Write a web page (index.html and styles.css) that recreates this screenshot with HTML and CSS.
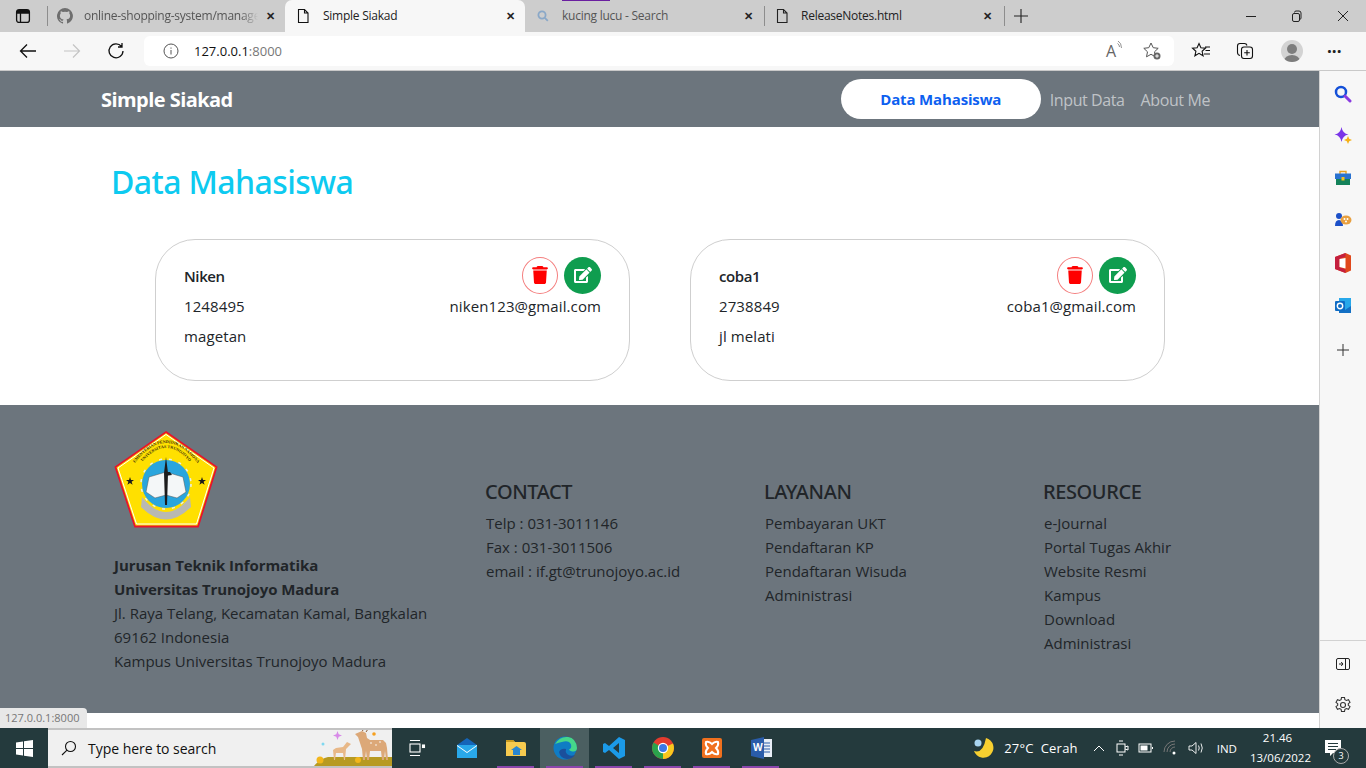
FILE: index.html
```html
<!DOCTYPE html>
<html lang="id">
<head>
<meta charset="utf-8">
<title>Simple Siakad</title>
<link rel="stylesheet" href="styles.css">
</head>
<body>
<div class="screen">
  <div class="tabstrip">
    <div class="tabside">
      <svg width="16" height="16" viewBox="0 0 16 16" fill="none" stroke="#111" stroke-width="1.3"><rect x="1.6" y="1.6" width="12.8" height="12.8" rx="2.5"/><path d="M2 5h12M5.5 5v9" /><path d="M2 2h12v3H2z" fill="#111" stroke="none"/></svg>
    </div>
    <div class="sep"></div>
    <div class="tab tab-gh">
      <svg class="tabicon" width="16" height="16" viewBox="0 0 16 16"><path fill="#6e6e6e" d="M8 0a8 8 0 0 0-2.53 15.59c.4.07.55-.17.55-.38v-1.4c-2.23.48-2.7-1.07-2.7-1.07-.36-.93-.89-1.17-.89-1.17-.73-.5.05-.49.05-.49.8.06 1.23.83 1.23.83.72 1.22 1.87.87 2.33.66.07-.52.28-.87.5-1.07-1.77-.2-3.64-.89-3.64-3.95 0-.87.31-1.59.82-2.15-.08-.2-.36-1.02.08-2.12 0 0 .67-.21 2.2.82a7.6 7.6 0 0 1 4 0c1.53-1.04 2.2-.82 2.2-.82.44 1.1.16 1.92.08 2.12.51.56.82 1.27.82 2.15 0 3.07-1.87 3.75-3.65 3.95.29.25.54.73.54 1.48v2.2c0 .21.15.46.55.38A8 8 0 0 0 8 0z"/></svg>
      <span class="tabtitle muted fade">online-shopping-system/manage</span>
      <span class="tabx">✕</span>
    </div>
    <div class="tab tab-active">
      <svg class="tabicon" width="16" height="16" viewBox="0 0 16 16" fill="none" stroke="#111" stroke-width="1.1"><path d="M3.5 1.5h6l3.5 3.5v9.5h-9.5zM9.5 1.5V5H13"/></svg>
      <span class="tabtitle">Simple Siakad</span>
      <span class="tabx">✕</span>
    </div>
    <div class="tab tab-search">
      <svg class="tabicon" width="16" height="16" viewBox="0 0 16 16" fill="none" stroke="#8aa8c8" stroke-width="1.8"><circle cx="7" cy="7" r="3.6"/><path d="M9.8 9.8l3 3"/></svg>
      <span class="tabtitle muted">kucing lucu - Search</span>
      <span class="tabx">✕</span>
    </div>
    <div class="sep"></div>
    <div class="tab tab-notes">
      <svg class="tabicon" width="16" height="16" viewBox="0 0 16 16" fill="none" stroke="#222" stroke-width="1.1"><path d="M3.5 1.5h6l3.5 3.5v9.5h-9.5zM9.5 1.5V5H13"/></svg>
      <span class="tabtitle">ReleaseNotes.html</span>
      <span class="tabx">✕</span>
    </div>
    <div class="sep"></div>
    <div class="newtab">
      <svg width="16" height="16" viewBox="0 0 16 16" stroke="#222" stroke-width="1.1"><path d="M8 1v14M1 8h14"/></svg>
    </div>
    <div class="winctl">
      <svg width="12" height="12" viewBox="0 0 12 12" stroke="#222"><path d="M1 6.5h10"/></svg>
      <svg width="12" height="12" viewBox="0 0 12 12" fill="none" stroke="#222"><rect x="1.5" y="3.5" width="7" height="8" rx="1.5"/><path d="M3.5 2.5q0-1.500 1.500-1.500h3q2 0 2 2v5q0 1-1 1.500"/></svg>
      <svg width="12" height="12" viewBox="0 0 12 12" stroke="#222"><path d="M1 1l10 10M11 1L1 11"/></svg>
    </div>
  </div>

  <div class="toolbar">
    <svg class="navbtn" width="18" height="18" viewBox="0 0 18 18" fill="none" stroke="#111" stroke-width="1.3"><path d="M17 9H1.500M8 2.500L1.500 9 8 15.500"/></svg>
    <svg class="navbtn" width="18" height="18" viewBox="0 0 18 18" fill="none" stroke="#c4c4c4" stroke-width="1.2"><path d="M1 9h15.500M10 2.500L16.500 9 10 15.500"/></svg>
    <svg class="navbtn" width="18" height="18" viewBox="0 0 18 18" fill="none" stroke="#111" stroke-width="1.3"><path d="M14.500 4.500A7 7 0 1 0 16 9M15 1v4h-4"/></svg>
    <div class="omnibox">
      <svg width="16" height="16" viewBox="0 0 16 16" fill="none" stroke="#555"><circle cx="8" cy="8" r="7"/><path d="M8 7v4.500M8 4.500v1.200"/></svg>
      <span class="url">127.0.0.1<span class="urlport">:8000</span></span>
      <span class="grow"></span>
      <span class="readaloud">A<svg width="6" height="10" viewBox="0 0 6 10" fill="none" stroke="#777" stroke-width=".8"><path d="M1 1q3.500 2 3.500 7M.5 3.500q2 1 2 3.500"/></svg></span>
      <svg width="20" height="20" viewBox="0 0 20 20" fill="none" stroke="#555"><path d="M9 2l2.200 4.700 5 .6-3.700 3.500 1 5L9 13.300 4.500 15.800l1-5L1.800 7.300l5-.6z"/><circle cx="15" cy="15" r="3.500" fill="#666" stroke="none"/><path d="M13.200 15h3.600M15 13.200v3.600" stroke="#fff"/></svg>
    </div>
    <svg class="tool tool-first" width="20" height="20" viewBox="0 0 20 20" fill="none" stroke="#111" stroke-width="1.1"><path d="M8 2.500l1.900 4.200 4.600.5-3.400 3.100 1 4.500L8 12.400 3.900 14.800l1-4.500L1.500 7.200l4.600-.5zM14 6h5M14.500 9.500h4.500M13 13h6"/></svg>
    <svg class="tool" width="20" height="20" viewBox="0 0 20 20" fill="none" stroke="#111" stroke-width="1.1"><path d="M5 14.500q-2.500-.5-2.500-3V5q0-2.500 2.500-2.500h4.500q2 0 2.500 2"/><rect x="6.500" y="6" width="11" height="11.500" rx="2.500"/><path d="M12 9v5.500M9.200 11.800h5.600"/></svg>
    <span class="avatar"><span class="avatar-head"></span><span class="avatar-body"></span></span>
    <span class="dots">···</span>
  </div>

  <div class="middle">
    <div class="page">
      <nav class="navbar">
        <a class="brand">Simple Siakad</a>
        <div class="navlinks">
          <a class="pill">Data Mahasiswa</a>
          <a class="navlink">Input Data</a>
          <a class="navlink">About Me</a>
        </div>
      </nav>
      <main class="content">
        <h1 class="heading">Data Mahasiswa</h1>
        <div class="cards">
          <article class="card">
            <div class="card-row">
              <strong class="card-name">Niken</strong>
              <div class="actions">
                <button class="btn btn-del"><svg width="16" height="18" viewBox="0 0 448 512"><path fill="#f00" d="M135 17.700C140.400 6.800 151.500 0 163.600 0h120.800c12.100 0 23.200 6.800 28.600 17.700L320 32h96c17.700 0 32 14.300 32 32s-14.300 32-32 32H32C14.300 96 0 81.700 0 64s14.300-32 32-32h96zM32 128h384l-21.200 339c-1.600 25.300-22.600 45-47.900 45H101.100c-25.300 0-46.300-19.700-47.900-45z"/></svg></button>
                <button class="btn btn-edit"><svg width="18" height="16" viewBox="0 0 576 512"><path fill="#fff" d="M402.600 83.200l90.200 90.200c3.800 3.800 3.800 10 0 13.800L274.400 405.600l-92.800 10.300c-12.400 1.400-22.900-9.100-21.500-21.500l10.300-92.800L388.800 83.200c3.800-3.800 10-3.800 13.800 0zm162-22.900l-48.800-48.800c-15.200-15.200-39.900-15.200-55.200 0l-35.400 35.400c-3.800 3.800-3.800 10 0 13.800l90.200 90.200c3.800 3.800 10 3.800 13.800 0l35.400-35.400c15.200-15.300 15.200-40 0-55.200zM384 346.200V448H64V128h229.800c3.200 0 6.200-1.300 8.500-3.500l40-40c7.600-7.600 2.200-20.500-8.500-20.500H48C21.500 64 0 85.500 0 112v352c0 26.500 21.500 48 48 48h352c26.500 0 48-21.500 48-48V306.200c0-10.700-12.900-16-20.500-8.500l-40 40c-2.200 2.300-3.500 5.300-3.500 8.500z"/></svg></button>
              </div>
            </div>
            <div class="card-row"><span>1248495</span><span>niken123@gmail.com</span></div>
            <div class="card-row"><span>magetan</span></div>
          </article>
          <article class="card">
            <div class="card-row">
              <strong class="card-name">coba1</strong>
              <div class="actions">
                <button class="btn btn-del"><svg width="16" height="18" viewBox="0 0 448 512"><path fill="#f00" d="M135 17.700C140.400 6.800 151.500 0 163.600 0h120.800c12.100 0 23.200 6.800 28.600 17.700L320 32h96c17.700 0 32 14.300 32 32s-14.300 32-32 32H32C14.300 96 0 81.700 0 64s14.300-32 32-32h96zM32 128h384l-21.200 339c-1.600 25.300-22.600 45-47.900 45H101.100c-25.300 0-46.300-19.700-47.900-45z"/></svg></button>
                <button class="btn btn-edit"><svg width="18" height="16" viewBox="0 0 576 512"><path fill="#fff" d="M402.600 83.200l90.200 90.200c3.800 3.800 3.800 10 0 13.800L274.400 405.600l-92.800 10.300c-12.400 1.400-22.900-9.100-21.500-21.500l10.300-92.800L388.800 83.200c3.800-3.800 10-3.800 13.800 0zm162-22.900l-48.800-48.800c-15.200-15.200-39.900-15.200-55.200 0l-35.400 35.400c-3.800 3.800-3.800 10 0 13.800l90.200 90.200c3.800 3.800 10 3.800 13.800 0l35.400-35.400c15.200-15.300 15.200-40 0-55.200zM384 346.200V448H64V128h229.800c3.200 0 6.200-1.300 8.500-3.500l40-40c7.600-7.600 2.200-20.500-8.500-20.500H48C21.500 64 0 85.500 0 112v352c0 26.500 21.500 48 48 48h352c26.500 0 48-21.500 48-48V306.200c0-10.700-12.900-16-20.500-8.500l-40 40c-2.200 2.300-3.500 5.300-3.500 8.500z"/></svg></button>
              </div>
            </div>
            <div class="card-row"><span>2738849</span><span>coba1@gmail.com</span></div>
            <div class="card-row"><span>jl melati</span></div>
          </article>
        </div>
      </main>
      <footer class="footer">
        <div class="fcol">
          <svg class="logo" width="104" height="98" viewBox="0 0 104 98">
            <path d="M51 1L101.500 36 83 95.500 20 95.500 .5 36z" fill="#ffe000" stroke="#e8132a" stroke-width="1.800"/>
            <path d="M51 3.500L99 37 81.500 93 21.500 93 3 37z" fill="none" stroke="#fff" stroke-width="1"/>
            <path id="arcA" d="M19 33Q51 -9 83 33" fill="none"/>
            <path id="arcB" d="M24 35Q51 -1 78 35" fill="none"/>
            <text class="logotext"><textPath href="#arcA" startOffset="50%">KEMENTERIAN PENDIDIKAN NASIONAL</textPath><textPath href="#arcB" startOffset="50%">UNIVERSITAS TRUNOJOYO</textPath></text>
            <path d="M27 66Q51 96 75 66L76 76Q51 101 26 76z" fill="#b9b9b2"/>
            <circle cx="51" cy="53" r="24" fill="#2aa5dd"/>
            <circle cx="51" cy="53" r="25" fill="none" stroke="#e8eef0" stroke-width="1.500" stroke-dasharray="3 7"/>
            <path d="M51 41L68 46 71 61 62 67 51 64 40 67 31 61 34 46z" fill="#f4f7f8" stroke="#555" stroke-width=".5"/>
            <path d="M51 26L53 42 52 74 50 74 49 42z" fill="#1c1c1c"/>
            <path d="M50 41h5l2 3-7 1z" fill="#1c1c1c"/>
            <path d="M15 46l1 3 3 0-2.400 1.800 1 3L15 52l-2.600 1.800 1-3L11 49l3 0z" fill="#1c1c1c"/>
            <path d="M87 46l1 3 3 0-2.400 1.800 1 3L87 52l-2.600 1.800 1-3L83 49l3 0z" fill="#1c1c1c"/>
          </svg>
          <p class="fline"><b class="fbold">Jurusan Teknik Informatika</b></p>
          <p class="fline"><b class="fbold">Universitas Trunojoyo Madura</b></p>
          <p class="fline">Jl. Raya Telang, Kecamatan Kamal, Bangkalan</p>
          <p class="fline">69162 Indonesia</p>
          <p class="fline">Kampus Universitas Trunojoyo Madura</p>
        </div>
        <div class="fcol fcol-links">
          <h2 class="ftitle">CONTACT</h2>
          <p class="fline">Telp : 031-3011146</p>
          <p class="fline">Fax : 031-3011506</p>
          <p class="fline">email : if.gt@trunojoyo.ac.id</p>
        </div>
        <div class="fcol fcol-links">
          <h2 class="ftitle">LAYANAN</h2>
          <p class="fline">Pembayaran UKT</p>
          <p class="fline">Pendaftaran KP</p>
          <p class="fline">Pendaftaran Wisuda</p>
          <p class="fline">Administrasi</p>
        </div>
        <div class="fcol fcol-links">
          <h2 class="ftitle">RESOURCE</h2>
          <p class="fline">e-Journal</p>
          <p class="fline">Portal Tugas Akhir</p>
          <p class="fline">Website Resmi</p>
          <p class="fline">Kampus</p>
          <p class="fline">Download</p>
          <p class="fline">Administrasi</p>
        </div>
      </footer>
      <div class="status">127.0.0.1:8000</div>
    </div>
    <aside class="sidebar">
      <svg width="18" height="18" viewBox="0 0 18 18" fill="none"><circle cx="7" cy="7" r="5" stroke="#1450d8" stroke-width="2.500"/><path d="M11 11l5 5" stroke="#8a3be0" stroke-width="3" stroke-linecap="round"/></svg>
      <svg width="18" height="18" viewBox="0 0 18 18"><path d="M7.500 0q1 6.500 7 7.500-6 1-7 7.500-1-6.500-7-7.500 6-1 7-7.500z" fill="#7a35e8"/><path d="M14 9l1.200 2.800L18 13l-2.800 1.200L14 17l-1.200-2.800L10 13l2.800-1.200z" fill="#f5b21a"/></svg>
      <svg width="18" height="18" viewBox="0 0 18 18"><path d="M6 5V2.500h6V5" fill="none" stroke="#e8a020" stroke-width="1.400"/><rect x="1" y="4.500" width="16" height="5.500" fill="#2a72d0"/><rect x="2" y="10" width="14" height="6" fill="#14825a"/><rect x="7.500" y="8" width="3" height="3.500" fill="#f5c020"/></svg>
      <svg width="18" height="18" viewBox="0 0 18 18"><circle cx="5" cy="5" r="3" fill="#1c50c8"/><path d="M1 15q0-6 4-6t4 6z" fill="#1c50c8"/><ellipse cx="12" cy="9" rx="5.500" ry="4.500" fill="#e8a040"/><circle cx="10.500" cy="8" r="1" fill="#fff"/><circle cx="13.500" cy="8" r="1" fill="#fff"/><circle cx="12" cy="10.500" r="1" fill="#fff"/></svg>
      <svg width="18" height="20" viewBox="0 0 18 20"><path d="M1 4L11.500 0 17 2.500v15L11.500 20 1 16z" fill="#e0481c"/><path d="M1 4L11.500 0v3.500L5.500 6v8l6 2.500V20L1 16z" fill="#c41f3e"/><path d="M5.500 6l6-1v10.500l-6-1.500z" fill="#fff"/></svg>
      <svg width="18" height="18" viewBox="0 0 18 18"><rect x="5" y="1" width="12" height="15" fill="#28a8ea"/><path d="M5 9l6 4 6-4v7H5z" fill="#1470c4"/><rect x="1" y="4" width="10" height="10" rx="1" fill="#0f6cc4"/><circle cx="6" cy="9" r="2.700" fill="none" stroke="#fff" stroke-width="1.400"/></svg>
      <svg class="side-add" width="14" height="14" viewBox="0 0 14 14" stroke="#333"><path d="M7 1v12M1 7h12"/></svg>
      <span class="grow"></span>
      <div class="sidebar-foot">
        <svg width="16" height="16" viewBox="0 0 16 16" fill="none" stroke="#222"><rect x="1.500" y="2.500" width="13" height="11" rx="1.500"/><path d="M10.500 2.500v11M4 8h4M6.200 6L8 8 6.200 10"/></svg>
        <svg width="18" height="18" viewBox="0 0 18 18" fill="none" stroke="#333" stroke-width="1.100"><circle cx="9" cy="9" r="2.500"/><path d="M7.500 1.500h3l.4 2.200 1.500.8 2.100-.8 1.500 2.600-1.700 1.400v1.600l1.700 1.400-1.500 2.600-2.100-.8-1.500.8-.4 2.200h-3l-.4-2.200-1.500-.8-2.100.8-1.500-2.600 1.700-1.400V7.700L2 6.300l1.500-2.600 2.100.8 1.500-.8z"/></svg>
      </div>
    </aside>
  </div>

  <div class="taskbar">
    <div class="startbtn">
      <svg width="17" height="17" viewBox="0 0 17 17" fill="#fff"><path d="M0 2.400L7 1.400V8H0zM8 1.200L17 0v8H8zM0 9h7v6.600L0 14.600zM8 9h9v8l-9-1.200z"/></svg>
    </div>
    <div class="searchbox">
      <svg width="16" height="16" viewBox="0 0 16 16" fill="none" stroke="#111" stroke-width="1.100"><circle cx="9.500" cy="6.500" r="5"/><path d="M6 10.200L1 15"/></svg>
      <span class="searchtext">Type here to search</span>
      <span class="grow"></span>
      <svg class="deer" width="78" height="38" viewBox="0 0 78 38">
        <path d="M0 38q6-7 14-9h64v9z" fill="#b79a22"/>
        <path d="M41 6l7-3 4 2 1 5 3 2h13l3 3 1 5 1 12h-2l-1-9-1 9h-2l-1-9H56l-1 9h-2l-1-9-1 9h-2l-1-11-2-6-2-6z" fill="#dca878"/>
        <path d="M49 3l-2-3M52 4l2-3M46 1h10" stroke="#8a5a34" fill="none"/>
        <g fill="#fff"><circle cx="57" cy="15" r=".8"/><circle cx="62" cy="17" r=".8"/><circle cx="66" cy="14" r=".8"/></g>
        <path d="M33 14l4 2-2 2-3 3-1 11h-1l-1-7h-7l-1 7h-1l-1-10 3-2 7-1z" fill="#e8b888"/>
        <path d="M23.500 3l1.200 3.300L28 7.500l-3.300 1.200L23.500 12l-1.200-3.300L19 7.500l3.300-1.200z" fill="#d88ae8"/>
        <circle cx="9" cy="16" r="1.500" fill="#80d8f0"/><circle cx="60" cy="6" r="1.800" fill="#f5a020"/>
        <circle cx="6" cy="32" r="3.500" fill="#f2b61c"/><circle cx="44" cy="32" r="3" fill="#f2b61c"/>
      </svg>
    </div>
    <div class="tbicon tb-view"><svg width="20" height="20" viewBox="0 0 20 20" fill="none" stroke="#fff" stroke-width="1.100"><rect x="3" y="6" width="10" height="8"/><path d="M3 2.500h10M3 17.500h10"/><rect x="15.500" y="7" width="2" height="2.500" fill="#fff"/></svg></div>
    <div class="tbicon"><svg width="24" height="24" viewBox="0 0 24 24"><path d="M12 2l10 7v13H2V9z" fill="#1565b8"/><rect x="2" y="9" width="20" height="13" fill="#29a8ea"/><path d="M2 9l10 7 10-7v1l-10 7-10-7z" fill="#fff"/></svg></div>
    <div class="tbicon tb-on"><svg width="24" height="24" viewBox="0 0 24 24"><path d="M2 5q0-1 1-1h6l2 2h9q2 0 2 2v12H2z" fill="#f7ca4f"/><path d="M2 4h7l2 2H2z" fill="#c89a20"/><rect x="9" y="13" width="7" height="6" fill="#2a86d0"/><path d="M7 14l5.500-4 5.500 4z" fill="#2a86d0"/></svg></div>
    <div class="tbicon tb-on tb-active"><svg width="26" height="26" viewBox="0 0 26 26"><circle cx="13" cy="13" r="11.500" fill="#0f7cc4"/><path d="M3 9Q8 1 16 2q8 1 9 11 0 3-3 3.500-4 0-5-2 3-1 2-5-2-4-7-3-6 1-9 2.500z" fill="#45d68a"/><path d="M14 14q-5-1-7 3 1 6 8 7 5 0 8-4-5 2-8-1-2-2-1-5z" fill="#1b4f9c"/></svg></div>
    <div class="tbicon tb-on"><svg width="24" height="24" viewBox="0 0 24 24"><path d="M17 1l6 3v16l-6 3L7 14l-4 3-2-1V8l2-1 4 3zM17 7l-6 5 6 5z" fill="#1b9ae8"/></svg></div>
    <div class="tbicon tb-on"><svg width="24" height="24" viewBox="0 0 24 24"><circle cx="12" cy="12" r="11" fill="#e33b2e"/><path d="M12 12L22 7.500A11 11 0 0 1 12 23z" fill="#f8c81e"/><path d="M12 12L12 23A11 11 0 0 1 2.500 6.500z" fill="#2ba24c"/><circle cx="12" cy="12" r="5.200" fill="#fff"/><circle cx="12" cy="12" r="4" fill="#3b78e7"/></svg></div>
    <div class="tbicon tb-on"><svg width="24" height="24" viewBox="0 0 24 24"><rect x="2" y="2" width="20" height="20" rx="2" fill="#f0701e"/><path d="M6 6q3-1 6 2 3-3 6-2 1 3-2 6 3 3 2 6-3 1-6-2-3 3-6 2-1-3 2-6-3-3-2-6z" fill="none" stroke="#fff" stroke-width="2"/></svg></div>
    <div class="tbicon tb-on"><svg width="24" height="24" viewBox="0 0 24 24"><rect x="8" y="3" width="15" height="18" fill="#e8eef7"/><path d="M14 7h7M14 10h7M14 13h7M14 16h7" stroke="#2a5caa"/><path d="M2 4l13-3v22L2 20z" fill="#2a5caa"/></svg><span class="word-w">W</span></div>
    <span class="grow"></span>
    <svg class="moon" width="22" height="22" viewBox="0 0 22 22"><path d="M13 1a10 10 0 1 1-12 13q9 3 12-13z" fill="#f8d030"/><circle cx="5" cy="6" r="3.500" fill="#a8d4f0"/></svg>
    <span class="weather">27°C&nbsp; Cerah</span>
    <svg class="tray" width="14" height="14" viewBox="0 0 14 14" fill="none" stroke="#fff"><path d="M2 10l5-5 5 5"/></svg>
    <svg class="tray" width="14" height="18" viewBox="0 0 14 18" fill="none" stroke="#fff"><rect x="2" y="5" width="8" height="8"/><path d="M10 8l3-1v4l-3-1M4 2h4M4 16h4"/></svg>
    <svg class="tray" width="16" height="14" viewBox="0 0 16 14" fill="none" stroke="#fff"><rect x="1" y="3" width="12" height="8"/><rect x="3" y="5" width="6" height="4" fill="#fff"/><path d="M14.500 6v2"/></svg>
    <svg class="tray" width="16" height="16" viewBox="0 0 16 16" fill="none" stroke="#777"><path d="M1 12a11 11 0 0 1 11-11M4 12a8 8 0 0 1 8-8M7 12a5 5 0 0 1 5-5"/><circle cx="11" cy="13" r="1.500" fill="#fff" stroke="none"/></svg>
    <svg class="tray tray-vol" width="16" height="16" viewBox="0 0 16 16" fill="none" stroke="#fff" stroke-width=".9"><path d="M1 6h3l4-3.500v11L4 10H1zM10.500 5.500q1.500 2.500 0 5M13 3.500q2.500 4.500 0 9" /></svg>
    <span class="lang">IND</span>
    <div class="clock"><span class="clock-time">21.46</span><span>13/06/2022</span></div>
    <div class="notif">
      <svg width="16" height="17" viewBox="0 0 16 17"><path d="M0 0h16v13H8l-3 3v-3H0z" fill="#fff"/><path d="M3 3.500h10M3 6.500h10M3 9.500h8" stroke="#243a3d"/></svg>
      <span class="badge">3</span>
    </div>
  </div>
</div>
</body>
</html>
```
FILE: styles.css
```css
* { box-sizing: border-box; }
html, body { margin: 0; padding: 0; overflow: hidden; }
body { width: 1366px; height: 768px; font-family: "Open Sans", "Noto Sans", sans-serif; }
p, h1, h2 { margin: 0; }
.grow { flex: 1; }
.screen { width: 1366px; height: 768px; display: flex; flex-direction: column; background: #fff; }

/* Tab strip */
.tabstrip { height: 32px; flex: none; display: flex; align-items: center; background: #cdcdcd; font: 12px/16px "Open Sans", sans-serif; color: #222; }
.tabside { width: 47px; display: flex; justify-content: center; padding-right: 1px; }
.sep { width: 1px; height: 20px; background: #8d8d8d; flex: none; }
.tab { height: 32px; display: flex; align-items: center; padding: 0 8px 0 10px; flex: none; }
.tab-gh { width: 237px; padding: 0 7px 0 9px; }
.tab-active { width: 240px; background: #f7f7f7; border-radius: 7px 7px 0 0; padding-right: 7px; }
.tab-search { width: 239px; position: relative; }
.tab-search::before { content: ""; position: absolute; left: 37px; top: 0; width: 48px; height: 1px; background: #6a1fa0; }
.tab-notes { width: 239px; padding: 0 9px 0 9px; }
.tabicon { flex: none; margin-right: 12px; }
.tab-gh .tabicon { margin-right: 11px; }
.tab-search .tabicon { margin-right: 11px; }
.tab-notes .tabicon { margin-right: 11px; }
.tabtitle { flex: 1; min-width: 0; white-space: nowrap; letter-spacing: -.25px; }
.muted { color: #555; }
.fade { -webkit-mask-image: linear-gradient(90deg, #000 90%, transparent); mask-image: linear-gradient(90deg, #000 90%, transparent); }
.tabx { width: 16px; text-align: center; font-size: 11px; font-weight: 600; color: #222; margin-left: 4px; flex: none; }
.newtab { width: 32px; display: flex; justify-content: center; }
.winctl { flex: 1; display: flex; justify-content: flex-end; gap: 34px; padding-right: 17px; }

/* Toolbar */
.toolbar { height: 39px; flex: none; display: flex; align-items: center; padding: 0 16px 0 19px; background: #f7f7f7; border-bottom: 1px solid #c9c9c9; }
.navbtn { flex: none; margin-right: 26px; }
.navbtn:nth-child(3) { margin-right: 19px; }
.omnibox { width: 1030px; height: 30px; background: #fff; border-radius: 6px; display: flex; align-items: center; padding: 0 12px 0 19px; gap: 15px; font-size: 13px; }
.url { color: #111; font: 13px "Open Sans", sans-serif; }
.urlport { color: #777; }
.readaloud { color: #666; font-size: 16px; display: flex; align-items: flex-start; margin-right: 4px; gap: 1px; }
.tool { flex: none; margin-left: 24px; }
.tool-first { margin-left: 17px; }
.avatar { width: 22px; height: 22px; margin-left: 26px; border-radius: 50%; background: #d3d3d3; position: relative; overflow: hidden; flex: none; }
.avatar-head { position: absolute; left: 6px; top: 4px; width: 10px; height: 10px; border-radius: 50%; background: #7d7d7d; }
.avatar-body { position: absolute; left: 3px; top: 15px; width: 16px; height: 12px; border-radius: 50%; background: #7d7d7d; }
.dots { margin-left: 24px; font-size: 17px; font-weight: 700; color: #222; line-height: 1; }

/* Middle */
.middle { height: 657px; flex: none; display: flex; }
.page { width: 1319px; flex: none; position: relative; display: flex; flex-direction: column; background: #fff; }
.navbar { height: 56px; flex: none; background: #6c757d; display: flex; align-items: center; justify-content: space-between; padding: 0 109px 0 101px; }
.brand { color: #fff; font-size: 20px; font-weight: 700; letter-spacing: -.55px; }
.navlinks { display: flex; align-items: center; }
.pill { width: 200px; height: 40px; border-radius: 20px; background: #fff; color: #0d5ff0; font-weight: 700; font-size: 15px; letter-spacing: -.15px; display: flex; align-items: center; justify-content: center; margin-right: 9px; }
.navlink { color: rgba(255,255,255,.58); font-size: 16px; line-height: 24px; padding-top: 1px; margin-right: 16px; letter-spacing: -.4px; }
.navlink:last-child { margin-right: 0; }

.content { height: 278px; flex: none; padding: 33px 154px 0 112px; }
.heading { font-family: "Noto Sans", sans-serif; font-size: 32px; line-height: 44px; font-weight: 500; color: #0dcaf0; letter-spacing: -.6px; margin-left: -1px; }
.cards { display: flex; gap: 60px; margin: 35px 0 0 43px; }
.card { width: 475px; height: 142px; border: 1px solid #cfcfcf; border-radius: 40px; padding: 21px 28px 0; font-size: 15px; letter-spacing: .1px; color: #212529; }
.card-row { height: 30px; display: flex; align-items: center; justify-content: space-between; }
.card-name { letter-spacing: -.4px; font-weight: 600; }
.actions { display: flex; gap: 6px; margin-top: -2px; }
.btn { width: 37px; height: 37px; border-radius: 50%; padding: 0; display: flex; align-items: center; justify-content: center; background: #fff; }
.btn-del { border: 1px solid #f47f7f; width: 36px; height: 37px; }
.btn-edit { border: 0; background: #0f9d4f; }

.footer { height: 308px; flex: none; background: #6c757d; padding: 24px 89px 0 114px; display: grid; grid-template-columns: 372px 279px 279px 279px; color: #212529; font-size: 15px; }
.logo { display: block; margin: 2px 0 24px 1px; overflow: visible; }
.logotext { font: 700 4.200px "Liberation Serif", serif; fill: #3a2f10; text-anchor: middle; }
.fline { line-height: 24px; white-space: nowrap; }
.fbold { letter-spacing: -.08px; }
.fcol-links { padding-top: 48px; }
.ftitle { font-family: "Noto Sans", sans-serif; font-size: 20px; line-height: 30px; font-weight: 500; letter-spacing: -.4px; margin: 0 0 4px -1px; }
.status { position: absolute; left: 0; top: 637px; width: 87px; height: 20px; background: #e8e8e8; border-radius: 0 4px 0 0; font: 11px/20px "Open Sans", sans-serif; color: #777; padding-left: 5px; }

/* Sidebar */
.sidebar { flex: 1; display: flex; flex-direction: column; align-items: center; gap: 24px; padding: 14px 0 0; background: #f7f7f7; border-left: 1px solid #d2d2d2; }
.side-add { margin-top: 4px; }
.sidebar-foot { align-self: stretch; height: 88px; border-top: 1px solid #d2d2d2; display: flex; flex-direction: column; align-items: center; gap: 24px; padding-top: 15px; margin-top: -24px; }

/* Taskbar */
.taskbar { height: 40px; flex: none; display: flex; align-items: center; background: #243a3d; color: #fff; font-size: 12px; }
.startbtn { width: 48px; display: flex; justify-content: center; }
.searchbox { width: 344px; height: 40px; flex: none; background: #f0f0f0; border: 1px solid #c2c2c2; border-width: 2px 0; display: flex; align-items: center; padding-left: 13px; overflow: hidden; color: #111; }
.searchtext { margin-left: 11px; font-size: 14px; letter-spacing: -.03px; }
.deer { flex: none; align-self: flex-end; }
.tbicon { width: 49px; height: 40px; display: flex; align-items: center; justify-content: center; position: relative; flex: none; }
.tb-view { width: 50px; }
.tb-on::after { content: ""; position: absolute; left: 6px; right: 6px; bottom: 0; height: 2px; background: #8a46ac; }
.tb-active { background: #4b5f61; }
.word-w { position: absolute; left: 17px; top: 12px; color: #fff; font: 700 10px/14px "Open Sans", sans-serif; }
.moon { margin-right: 9px; flex: none; }
.weather { font-size: 13px; letter-spacing: .2px; margin-right: 14px; white-space: nowrap; }
.tray { flex: none; margin-right: 9px; }
.tray-vol { margin-right: 7px; }
.lang { font-size: 11.500px; margin: 0 13px 0 6px; }
.clock { display: flex; flex-direction: column; align-items: center; font-size: 11.500px; line-height: 20px; margin-right: 11px; }
.clock-time { margin-right: 6px; }
.notif { position: relative; width: 44px; display: flex; padding-left: 3px; }
.badge { position: absolute; left: 11px; top: 8px; width: 16px; height: 16px; border-radius: 50%; background: #243a3d; border: 1px solid #aaa; font-size: 9px; line-height: 14px; text-align: center; }
```
